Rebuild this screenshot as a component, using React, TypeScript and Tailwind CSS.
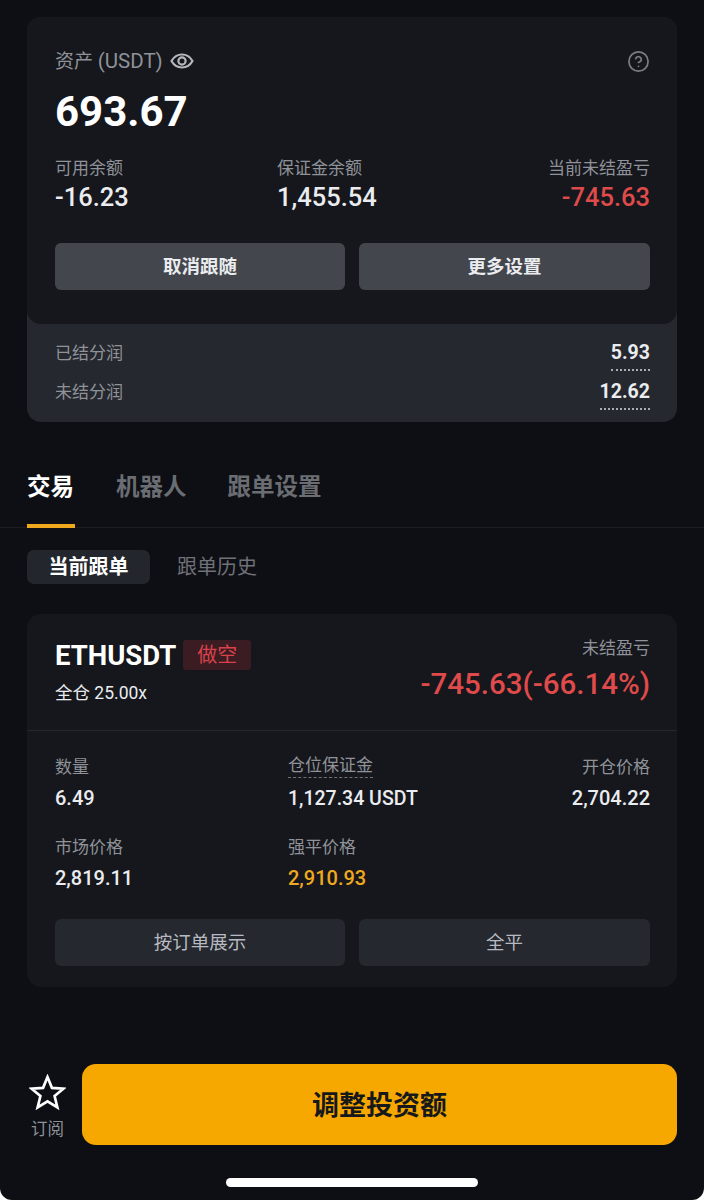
import React from 'react';
import { CircleHelp } from 'lucide-react';

const FONT = 'font-["Roboto","Noto_Sans_CJK_SC",sans-serif]';

const Stat: React.FC<{ label: string; value: string; right?: boolean; valueClass?: string }> = ({
  label,
  value,
  right,
  valueClass = 'text-[#eaecef]',
}) => (
  <div className={right ? 'text-right' : ''}>
    <div className="text-[17px] leading-[24px] text-[#8f9298]">{label}</div>
    <div className={`mt-[7px] text-[20px] leading-[24px] font-medium ${valueClass}`}>{value}</div>
  </div>
);

const App: React.FC = () => {
  return (
    <div className="bg-white">
      <div className={`${FONT} flex h-[1200px] w-[704px] flex-col overflow-hidden rounded-b-[12px] bg-[#0e0f14]`}>
        {/* Asset card */}
        <section className="mx-[27px] mt-[17px] rounded-[14px] bg-[#25282e]">
          <div className="h-[307px] rounded-[14px] bg-[#15171c] pt-[31px] pr-[27px] pl-[28px]">
            <div className="flex h-[26px] items-center justify-between">
              <div className="flex items-center gap-[7px] text-[19px] leading-[26px] text-[#8f9298]">
                <span>
                  资产 <span className="text-[20.5px]">(USDT)</span>
                </span>
                <svg viewBox="0 0 24 24" className="h-[24px] w-[24px]" fill="none" stroke="#b4b7bc" strokeWidth="2.2">
                  <path d="M1.500 12C4 7.600 7.600 5.500 12 5.500s8 2.100 10.500 6.500c-2.500 4.400-6.100 6.500-10.500 6.500S4 16.400 1.500 12z" />
                  <circle cx="12" cy="12" r="3.600" />
                </svg>
              </div>
              <CircleHelp className="h-[23px] w-[23px] text-[#7a7d83]" strokeWidth={1.8} />
            </div>
            <div className="mt-[14px] h-[48px] text-[42px] leading-[48px] font-bold text-white">693.67</div>

            <div className="mt-[20px] grid grid-cols-[222px_1fr_auto]">
              <div>
                <div className="text-[17px] leading-[24px] text-[#8f9298]">可用余额</div>
                <div className="mt-[2px] text-[25.5px] leading-[30px] font-medium text-[#eaecef]">-16.23</div>
              </div>
              <div>
                <div className="text-[17px] leading-[24px] text-[#8f9298]">保证金余额</div>
                <div className="mt-[2px] text-[25.5px] leading-[30px] font-medium text-[#eaecef]">1,455.54</div>
              </div>
              <div className="text-right">
                <div className="text-[17px] leading-[24px] text-[#8f9298]">当前未结盈亏</div>
                <div className="mt-[2px] text-[25.5px] leading-[30px] font-medium text-[#df4a4a]">-745.63</div>
              </div>
            </div>

            <div className="mt-[31px] grid grid-cols-[290px_291px] gap-[14px]">
              <button className="h-[47px] rounded-[6px] bg-[#43464c] pt-[3px] text-[18.5px] font-bold text-[#eaecef]">取消跟随</button>
              <button className="h-[47px] rounded-[6px] bg-[#43464c] pt-[3px] text-[18.5px] font-bold text-[#eaecef]">更多设置</button>
            </div>
          </div>
          <div className="h-[98px] pt-[10px] pr-[27px] pl-[28px]">
            <div className="flex h-[39px] items-start justify-between">
              <span className="text-[17px] leading-[38px] text-[#8f9298]">已结分润</span>
              <span className="h-[37px] border-b-2 border-dotted border-[#a9adb3] text-[19.5px] leading-[38px] font-bold text-[#eaecef]">5.93</span>
            </div>
            <div className="flex h-[39px] items-start justify-between">
              <span className="text-[17px] leading-[38px] text-[#8f9298]">未结分润</span>
              <span className="h-[37px] border-b-2 border-dotted border-[#a9adb3] text-[19.5px] leading-[38px] font-bold text-[#eaecef]">12.62</span>
            </div>
          </div>
        </section>

        {/* Tabs */}
        <nav className="mt-[42px] flex h-[64px] gap-[41px] border-b border-[#1c1e24] px-[27px]">
          <div className="h-[64px] w-[48px] border-b-[4px] border-[#f0a91e] text-[23.5px] leading-[46px] font-bold whitespace-nowrap text-white">交易</div>
          <div className="text-[23.5px] leading-[46px] font-bold text-[#6a6d72]">机器人</div>
          <div className="text-[23.5px] leading-[46px] font-bold text-[#6a6d72]">跟单设置</div>
        </nav>

        <div className="mt-[22px] flex h-[34px] items-center gap-[27px] px-[27px]">
          <div className="flex h-[34px] w-[123px] items-center justify-center rounded-[7px] bg-[#23262c] text-[20px] font-bold text-white">当前跟单</div>
          <div className="text-[20px] text-[#6f7278]">跟单历史</div>
        </div>

        {/* Position card */}
        <section className="mx-[27px] mt-[30px] h-[373px] rounded-[14px] bg-[#15171c]">
          <div className="flex h-[117px] justify-between border-b border-[#24272d] pt-[27px] pr-[27px] pl-[28px]">
            <div>
              <div className="flex items-center gap-[7px]">
                <span className="text-[27.5px] leading-[30px] font-bold text-white">ETHUSDT</span>
                <span className="-mt-[2px] flex h-[30px] w-[68px] items-center justify-center rounded-[3px] bg-[#3a1c22] text-[20px] text-[#d9424a]">做空</span>
              </div>
              <div className="mt-[10px] text-[17.5px] leading-[24px] text-[#eaecef]">全仓 25.00x</div>
            </div>
            <div className="-mt-[5px] text-right">
              <div className="text-[17px] leading-[24px] text-[#8f9298]">未结盈亏</div>
              <div className="mt-[6px] text-[29.5px] leading-[36px] font-medium text-[#df4a4a]">-745.63(-66.14%)</div>
            </div>
          </div>

          <div className="grid grid-cols-[233px_1fr_auto] gap-y-[24px] pt-[24px] pr-[27px] pl-[28px]">
            <Stat label="数量" value="6.49" />
            <div>
              <div className="-mt-[2px] w-fit border-b border-dashed border-[#6e7279] text-[17px] leading-[24px] text-[#8f9298]">仓位保证金</div>
              <div className="mt-[9px] text-[19.5px] leading-[24px] font-medium text-[#eaecef]">1,127.34 USDT</div>
            </div>
            <Stat label="开仓价格" value="2,704.22" right />
            <Stat label="市场价格" value="2,819.11" />
            <Stat label="强平价格" value="2,910.93" valueClass="text-[#f0a91e]" />
          </div>

          <div className="mt-[29px] grid grid-cols-[290px_291px] gap-[14px] pr-[27px] pl-[28px]">
            <button className="h-[47px] rounded-[6px] bg-[#25282e] pt-[2px] text-[18.5px] text-[#b7bbc1]">按订单展示</button>
            <button className="h-[47px] rounded-[6px] bg-[#25282e] pt-[2px] text-[18.5px] text-[#b7bbc1]">全平</button>
          </div>
        </section>

        {/* Bottom bar */}
        <div className="mt-auto flex items-center gap-[16px] pr-[27px] pl-[29px]">
          <div className="flex w-[37px] flex-col items-center pt-[5px]">
            <svg viewBox="0 0 36 36" className="h-[37px] w-[37px]" fill="none" stroke="white" strokeWidth="2.6">
              <polygon points="18,3 22.3,13.5 33.5,14.3 24.9,21.5 27.6,32.5 18,26.6 8.4,32.5 11.1,21.5 2.5,14.3 13.7,13.5" />
            </svg>
            <span className="mt-[8px] text-[16.5px] leading-[22px] text-[#8f9298]">订阅</span>
          </div>
          <button className="h-[81px] flex-1 rounded-[14px] bg-[#f6a800] pt-[3px] text-[27px] font-bold text-[#17181c]">调整投资额</button>
        </div>
        <div className="mx-auto mt-[33px] mb-[13px] h-[9px] w-[252px] rounded-full bg-white" />
      </div>
    </div>
  );
};

export default App;
